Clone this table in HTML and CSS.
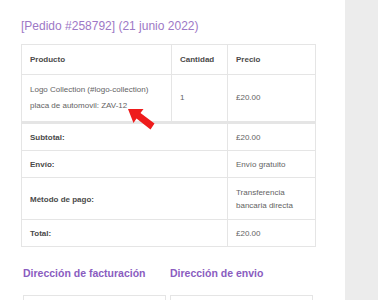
FILE: index.html
```html
<!DOCTYPE html>
<html lang="es">
<head>
<meta charset="utf-8">
<link rel="stylesheet" href="styles.css">
</head>
<body>
<div class="page">
  <main class="content">
    <h2 class="order-title">[Pedido #258792] (21 junio 2022)</h2>
    <div class="table-wrap">
      <table class="order">
        <colgroup><col class="c1"><col class="c2"><col class="c3"></colgroup>
        <thead>
          <tr><th>Producto</th><th>Cantidad</th><th>Precio</th></tr>
        </thead>
        <tbody>
          <tr class="item">
            <td>Logo Collection (#logo-collection)<br><span class="meta">placa de automovil: ZAV-12</span></td>
            <td>1</td>
            <td>£20.00</td>
          </tr>
        </tbody>
        <tfoot>
          <tr class="first"><th colspan="2">Subtotal:</th><td>£20.00</td></tr>
          <tr><th colspan="2">Envío:</th><td>Envío gratuito</td></tr>
          <tr class="pay"><th colspan="2">Método de pago:</th><td>Transferencia bancaria directa</td></tr>
          <tr><th colspan="2">Total:</th><td>£20.00</td></tr>
        </tfoot>
      </table>
      <svg class="arrow" width="34" height="26" viewBox="0 0 34 26">
        <path d="M1 1 L16.5 1 L13.5 5 L27.5 15.5 L23.5 21.5 L9.5 10.5 L6.5 15 Z" fill="#ee1c1c"/>
      </svg>
    </div>
    <div class="addresses">
      <section class="addr">
        <h3>Dirección de facturación</h3>
        <div class="box"></div>
      </section>
      <section class="addr">
        <h3>Dirección de envio</h3>
        <div class="box"></div>
      </section>
    </div>
  </main>
  <aside class="side"></aside>
</div>
</body>
</html>
```
FILE: styles.css
```css
html, body {
  margin: 0;
  padding: 0;
  background: #ffffff;
}
body {
  font-family: "Liberation Sans", Arial, sans-serif;
  color: #636363;
}
.page {
  display: flex;
  height: 300px;
  overflow: hidden;
}
.content {
  width: 345px;
  flex: 0 0 345px;
  padding: 19px 0 0 21px;
  box-sizing: border-box;
}
.side {
  flex: 1;
  background: #ececec;
}
.order-title {
  margin: 0 0 10px 0;
  font-size: 12px;
  font-weight: normal;
  line-height: 15px;
  color: #9d78c6;
}
.table-wrap {
  position: relative;
  width: 294px;
}
.order {
  width: 294px;
  border-collapse: collapse;
  table-layout: fixed;
  font-size: 8px;
  line-height: 13px;
  border: 1px solid #e5e5e5;
}
.c1 { width: 150px; }
.c2 { width: 56px; }
.c3 { width: 88px; }
.order th, .order td {
  border: 1px solid #e5e5e5;
  text-align: left;
  vertical-align: middle;
  padding: 8px 8px;
}
.order th {
  color: #4a4a4a;
  font-weight: bold;
}
.order thead th {
  height: 12px;
}
.order .item td {
  height: 30px;
  padding-top: 7px;
  padding-bottom: 7px;
  line-height: 16px;
}
.order tfoot .first th, .order tfoot .first td {
  border-top: 3px solid #e5e5e5;
}
.order tfoot th, .order tfoot td {
  height: 13px;
  padding-top: 7px;
  padding-bottom: 6px;
}
.order tfoot .pay th, .order tfoot .pay td {
  height: 26px;
  padding-top: 8px;
  padding-bottom: 7px;
}
.arrow {
  position: absolute;
  left: 106px;
  top: 64px;
}
.addresses {
  display: flex;
  gap: 4px;
  margin-top: 19px;
  padding-left: 2px;
}
.addr {
  width: 143px;
}
.addr h3 {
  margin: 0 0 15px 0;
  font-size: 10.5px;
  line-height: 14px;
  font-weight: bold;
  color: #8a5cc0;
}
.box {
  border: 1px solid #e5e5e5;
  height: 40px;
}
```
